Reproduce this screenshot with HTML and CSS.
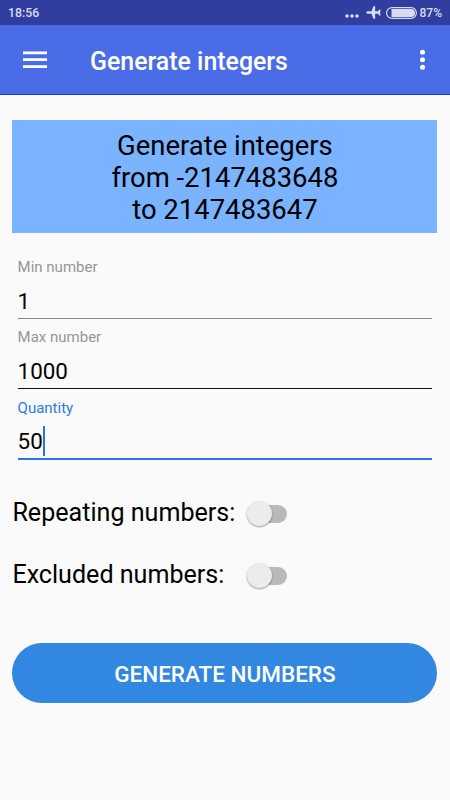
FILE: index.html
```html
<!DOCTYPE html>
<html lang="en">
<head>
<meta charset="utf-8">
<title>Generate integers</title>
<link rel="stylesheet" href="styles.css">
</head>
<body>
<div class="status">
  <span class="clock">18:56</span>
  <div class="status-icons">
    <svg class="dots" width="14" height="4" viewBox="0 0 14 4"><circle cx="2" cy="2" r="1.8"/><circle cx="7" cy="2" r="1.8"/><circle cx="12" cy="2" r="1.8"/></svg>
    <svg class="plane" width="15" height="13" viewBox="0 0 15 13"><path d="M.3 6.5Q.3 5.2 2 5.2H5.6L7.3 .3H9.2L9.1 5.2H12L13.3 3.4H14.5L14.1 6.5L14.5 9.6H13.3L12 7.8H9.1L9.2 12.7H7.3L5.6 7.8H2Q.3 7.8 .3 6.5Z"/></svg>
    <svg class="battery" width="31" height="12" viewBox="0 0 31 12"><rect class="shell" x=".6" y=".6" width="29.8" height="10.8" rx="5.4"/><path d="M5.5 2H25A4 4 0 0 1 25 10H5.5Z"/></svg>
    <span class="percent">87%</span>
  </div>
</div>
<header class="bar">
  <svg class="menu" width="24" height="18" viewBox="0 0 24 18"><path d="M0 .5H24V3.2H0ZM0 7.3H24V10H0ZM0 14.2H24V16.9H0Z"/></svg>
  <h1 class="title">Generate integers</h1>
  <svg class="more" width="6" height="22" viewBox="0 0 6 22"><circle cx="3.5" cy="3.2" r="2.5"/><circle cx="3.5" cy="10.7" r="2.5"/><circle cx="3.5" cy="18.2" r="2.5"/></svg>
</header>
<main class="content">
  <div class="banner">Generate integers<br>from -2147483648<br>to 2147483647</div>
  <div class="fields">
    <div class="field">
      <div class="label">Min number</div>
      <div class="value">1</div>
    </div>
    <div class="field dark">
      <div class="label">Max number</div>
      <div class="value">1000</div>
    </div>
    <div class="field active">
      <div class="label">Quantity</div>
      <div class="value">50<span class="caret"></span></div>
    </div>
  </div>
  <div class="option"><span class="option-text">Repeating numbers:</span><span class="switch"><span class="thumb"></span></span></div>
  <div class="option"><span class="option-text">Excluded numbers:</span><span class="switch"><span class="thumb"></span></span></div>
  <button class="generate">GENERATE NUMBERS</button>
</main>
</body>
</html>
```
FILE: styles.css
```css
* { box-sizing: border-box; }
body { margin: 0; height: 800px; overflow: hidden; background: #fafafa; color: #000; font-family: Roboto, sans-serif; }
svg { display: block; fill: currentColor; flex: none; overflow: visible; }
.status { height: 25px; padding: 0 8px; display: flex; align-items: center; justify-content: space-between; background: #303f9f; color: #d9dcf0; font-size: 12px; line-height: 25px; font-weight: 500; }
.clock { padding-top: 1px; font-size: 12.3px; }
.percent { padding-top: 1px; }
.status-icons { display: flex; align-items: center; }
.dots { margin: 7px 7px 0 0; }
.plane { margin-right: 5px; }
.battery { margin-right: 3px; }
.shell { fill: none; stroke: currentColor; stroke-width: 1.2; }
.bar { height: 70px; padding: 0 25px 0 23px; display: flex; align-items: center; background: #4a6de7; color: #fff; border-bottom: 1px solid #0b46dc; }
.title { flex: 1; margin: 5px 0 0 43px; font-size: 24.9px; line-height: 30px; font-weight: 500; }
.more { margin-top: 1px; }
.content { padding: 25px 12.6px 0 12.4px; }
.banner { height: 113px; padding-top: 10px; background: #7ab3ff; text-align: center; font-size: 27.45px; line-height: 32px; }
.fields { padding: 24px 5.2px 0; }
.field { height: 70.4px; }
.label { height: 20px; font-size: 15px; line-height: 20px; color: #969696; }
.value { height: 42px; padding-top: 9px; display: flex; font-size: 22.4px; line-height: 30px; border-bottom: 1px solid #888; }
.dark .value { border-color: #111; }
.active .label { color: #2b7be5; }
.active .value { height: 42.6px; padding-top: 8px; border-bottom: 2px solid #2b72e8; }
.caret { width: 2px; height: 30px; background: #2b72e8; }
.option { height: 62px; display: flex; align-items: center; font-size: 25.1px; }
.fields + .option { margin-top: 14px; }
.option-text { width: 234.3px; margin-top: -1px; }
.switch { position: relative; width: 40px; height: 18px; margin-top: 2px; border-radius: 9px; background: linear-gradient(90deg, transparent 12px, #b9b9b9 12px); }
.thumb { position: absolute; left: 0; top: -4px; width: 25px; height: 25px; border-radius: 50%; background: #ececec; box-shadow: 0 1px 2px rgba(0,0,0,.4); }
.generate { display: block; width: 100%; height: 60px; margin-top: 37px; padding: 1px 0 0; border: 0; border-radius: 30px; background: #3287e0; color: #fff; font: 500 22.5px Roboto, sans-serif; }
```
